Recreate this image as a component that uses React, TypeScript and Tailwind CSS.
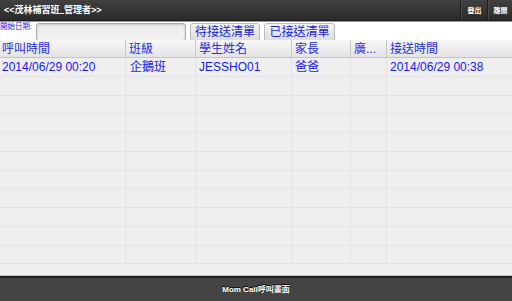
import React from "react";

const cols = [126, 70, 96, 59, 36, 125];
const headers = ["呼叫時間", "班級", "學生姓名", "家長", "廣...", "接送時間"];
const row1 = ["2014/06/29 00:20", "企鵝班", "JESSHO01", "爸爸", "", "2014/06/29 00:38"];
const cjk = '"Liberation Sans", "Noto Sans CJK TC", sans-serif';

export default function App() {
  const emptyRows = Array.from({ length: 10 });
  return (
    <div className="w-[512px] h-[301px] flex flex-col bg-[#efefef] overflow-hidden" style={{ fontFamily: cjk }}>
      {/* top bar */}
      <div className="h-[21px] flex items-stretch bg-gradient-to-b from-[#414141] to-[#2a2a2a] border-b border-[#1c1c1c] shrink-0">
        <div className="flex-1 flex items-center pl-[4px] pb-[1px] text-white text-[9px] font-bold leading-[14px]">
          <span>&lt;&lt;茂林補習班</span>
          <span className="inline-block -translate-y-[1.5px]" style={{ fontFamily: '"DejaVu Sans", sans-serif' }}>_</span>
          <span>管理者&gt;&gt;</span>
        </div>
        <div className="flex items-stretch text-white text-[7px] font-bold leading-none">
          <div className="w-px bg-[#1e1e1e]" />
          <div className="w-[26px] flex items-center justify-center border-l border-[#4a4a4a]">登出</div>
          <div className="w-px bg-[#1e1e1e]" />
          <div className="w-[24px] flex items-center justify-center border-l border-[#4a4a4a]">離開</div>
        </div>
      </div>
      {/* filter row */}
      <div className="h-[19px] flex items-start bg-white shrink-0 border-t border-[#9a9a9a]">
        <div className="w-[36px] text-[7.5px] leading-none text-[#2424e8] pt-[1px] whitespace-nowrap">
          開始日期:
        </div>
        <div className="w-[150px] h-[18px] mt-[1px] rounded-[3px] border border-[#a8a8a8] bg-gradient-to-b from-[#e9e9e9] to-[#f4f4f4] shadow-[inset_0_1px_2px_rgba(0,0,0,0.15)]" />
        <div className="flex items-start ml-[4px] gap-[4px] mt-[1px]">
          <div className="w-[70px] h-[18px] flex items-center justify-center rounded-t-[3px] border border-[#bcbcbc] bg-gradient-to-b from-[#f4f4f4] to-[#dedede] text-[12px] leading-none text-[#2222dd]">
            待接送清單
          </div>
          <div className="w-[71px] h-[18px] flex items-center justify-center rounded-t-[3px] border border-[#bcbcbc] bg-gradient-to-b from-[#f4f4f4] to-[#dedede] text-[12px] leading-none text-[#2222dd]">
            已接送清單
          </div>
        </div>
      </div>
      {/* table header */}
      <div className="h-[18px] flex bg-gradient-to-b from-[#f7f7f7] to-[#e4e4e4] border-b border-[#c4c4c4] shrink-0">
        {headers.map((h, i) => (
          <div
            key={i}
            style={{ width: cols[i] }}
            className={`flex items-center text-[12px] leading-none text-[#2a2ae0] whitespace-nowrap overflow-hidden ${i < 5 ? "border-r border-[#c8c8c8]" : ""} ${i > 0 ? "pl-[3px]" : "pl-[2px]"}`}
          >
            {h}
          </div>
        ))}
      </div>
      {/* table body */}
      <div className="flex-1 flex flex-col overflow-hidden">
        <div className="h-[18.75px] flex border-b border-[#e4e4e4] shrink-0">
          {row1.map((c, i) => (
            <div
              key={i}
              style={{ width: cols[i] }}
              className={`flex items-center text-[12px] leading-none text-[#1818f0] whitespace-nowrap overflow-hidden ${i < 5 ? "border-r border-[#e4e4e4]" : ""} ${i === 0 ? "pl-[2px]" : i === 1 ? "pl-[4px]" : "pl-[3px]"}`}
            >
              {c}
            </div>
          ))}
        </div>
        {emptyRows.map((_, r) => (
          <div key={r} className="h-[18.75px] flex border-b border-[#e4e4e4] shrink-0">
            {cols.map((w, i) => (
              <div key={i} style={{ width: w }} className={i < 5 ? "border-r border-[#e4e4e4]" : ""} />
            ))}
          </div>
        ))}
      </div>
      {/* footer */}
      <div className="h-[25px] shrink-0 flex items-center justify-center bg-[#444444] border-t-2 border-t-[#222222] shadow-[0_-1px_0_#bdbdbd] text-white text-[8px] font-bold leading-none [text-shadow:0_-1px_0_#000]">
        Mom Call呼叫畫面
      </div>
    </div>
  );
}
